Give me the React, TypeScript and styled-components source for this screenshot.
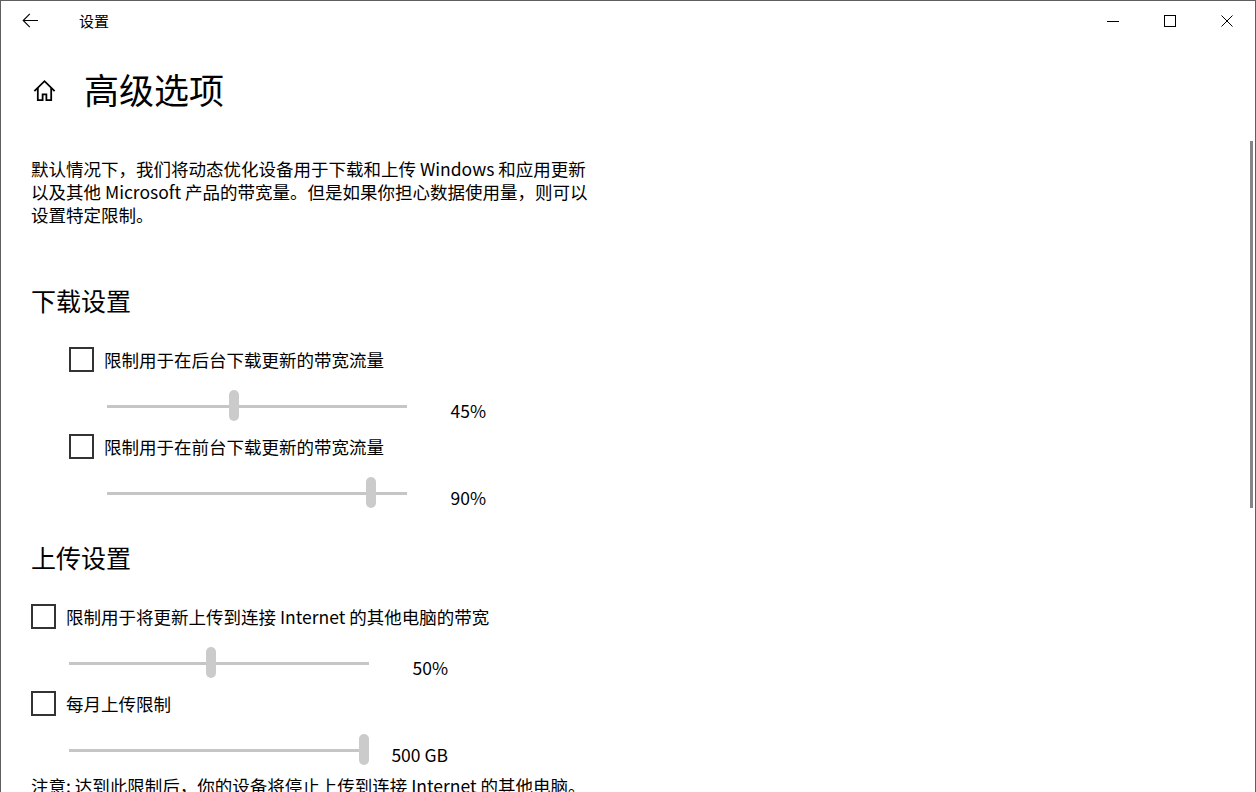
import React from 'react';
import styled, { createGlobalStyle } from 'styled-components';

const FONT = `"Noto Sans CJK SC", "Noto Sans", sans-serif`;

type Option = {
  label: string;
  value: number;
  text: string;
};

const downloadOptions: Option[] = [
  { label: '限制用于在后台下载更新的带宽流量', value: 45, text: '45%' },
  { label: '限制用于在前台下载更新的带宽流量', value: 90, text: '90%' },
];

const uploadOptions: Option[] = [
  { label: '限制用于将更新上传到连接 Internet 的其他电脑的带宽', value: 50, text: '50%' },
  { label: '每月上传限制', value: 100, text: '500 GB' },
];

// windows sliders here run from 5 to 100
const MIN = 5;
const MAX = 100;
const TRACK = 300;
const THUMB = 10;

const App = () => {
  return (
    <>
      <GlobalStyle />
      <Window>
        <TitleBar>
          <BackButton>
            <svg width="17" height="15" viewBox="0 0 17 15" fill="none" stroke="#000" strokeWidth="1.1">
              <path d="M16 7.5H1.2M7.8 0.9L1.2 7.5l6.6 6.6" />
            </svg>
          </BackButton>
          <AppName>设置</AppName>
          <Spacer />
          <CaptionButton>
            <svg width="12" height="12" viewBox="0 0 12 12" stroke="#000" strokeWidth="1">
              <path d="M0 6.5h12" />
            </svg>
          </CaptionButton>
          <CaptionButton>
            <svg width="12" height="12" viewBox="0 0 12 12" fill="none" stroke="#000" strokeWidth="1">
              <rect x="0.5" y="0.5" width="11" height="11" />
            </svg>
          </CaptionButton>
          <CaptionButton>
            <svg width="12" height="12" viewBox="0 0 12 12" stroke="#000" strokeWidth="1">
              <path d="M0.5 0.5l11 11M11.5 0.5l-11 11" />
            </svg>
          </CaptionButton>
        </TitleBar>

        <Content>
          <PageHeader>
            <HomeIcon>
              <svg width="23" height="23" viewBox="0 0 22 22" fill="none" stroke="#000" strokeWidth="1.7" strokeLinejoin="miter">
                <path d="M1.3 11.6L11 2.1l9.7 9.5" />
                <path d="M4.6 8.6V20.2h4.6v-5.6h3.6v5.6h4.6V8.6" />
              </svg>
            </HomeIcon>
            <PageTitle>高级选项</PageTitle>
          </PageHeader>

          <Intro>
            默认情况下，我们将动态优化设备用于下载和上传 Windows 和应用更新
            <br />
            以及其他 Microsoft 产品的带宽量。但是如果你担心数据使用量，则可以
            <br />
            设置特定限制。
          </Intro>

          <SectionTitle>下载设置</SectionTitle>
          <OptionGroup $indent={38}>
            {downloadOptions.map((o) => (
              <OptionItem key={o.label} option={o} />
            ))}
          </OptionGroup>

          <SectionTitle>上传设置</SectionTitle>
          <OptionGroup $indent={0}>
            {uploadOptions.map((o) => (
              <OptionItem key={o.label} option={o} />
            ))}
          </OptionGroup>

          <Note>注意: 达到此限制后，你的设备将停止上传到连接 Internet 的其他电脑。</Note>
        </Content>

        <ScrollThumb />
      </Window>
    </>
  );
};

const OptionItem = ({ option }: { option: Option }) => {
  const left = ((option.value - MIN) / (MAX - MIN)) * (TRACK - THUMB);
  return (
    <div>
      <CheckRow>
        <CheckBox />
        <CheckLabel>{option.label}</CheckLabel>
      </CheckRow>
      <SliderRow>
        <Track>
          <Rail />
          <Thumb style={{ left }} />
        </Track>
        <Value>{option.text}</Value>
      </SliderRow>
    </div>
  );
};

const GlobalStyle = createGlobalStyle`
  html, body {
    margin: 0;
    padding: 0;
    background: #ffffff;
    overflow: hidden;
  }

  * {
    box-sizing: border-box;
  }
`;

const Window = styled.div`
  position: relative;
  width: 1256px;
  height: 792px;
  overflow: hidden;

  border: 1px solid #5e5e5e;
  border-bottom: none;
  background: #ffffff;

  font-family: ${FONT};
  color: #000000;
`;

const TitleBar = styled.div`
  display: flex;
  align-items: center;
  height: 39px;
`;

const BackButton = styled.div`
  display: flex;
  justify-content: center;
  align-items: center;
  width: 59px;
  height: 39px;
`;

const AppName = styled.span`
  margin-left: 19px;
  font-size: 15px;
  line-height: 20px;
`;

const Spacer = styled.div`
  flex: 1;
`;

const CaptionButton = styled.div`
  display: flex;
  justify-content: center;
  align-items: center;
  width: 57px;
  height: 39px;
`;

const Content = styled.main`
  padding-left: 30px;
`;

const PageHeader = styled.header`
  display: flex;
  align-items: center;
  height: 44px;
  margin-top: 27px;
`;

const HomeIcon = styled.div`
  display: flex;
  justify-content: center;
  align-items: center;
  width: 27px;
  height: 26px;
  margin-top: 2px;
  margin-right: 26px;
`;

const PageTitle = styled.h1`
  margin: 0;
  font-size: 35px;
  font-weight: 400;
  line-height: 44px;
`;

const Intro = styled.p`
  margin: 46px 0 57px;
  font-size: 17.5px;
  line-height: 23px;
`;

const SectionTitle = styled.h2`
  margin: 23px 0 26px;
  font-size: 25px;
  font-weight: 400;
  line-height: 34px;
`;

const OptionGroup = styled.section<{ $indent: number }>`
  display: flex;
  flex-direction: column;
  padding-left: ${(p) => p.$indent}px;
`;

const CheckRow = styled.div`
  display: flex;
  align-items: center;
  height: 32px;
`;

const CheckBox = styled.span`
  width: 25px;
  height: 25px;
  border: 2px solid #333333;
  background: #ffffff;
`;

const CheckLabel = styled.span`
  margin-left: 10px;
  font-size: 17.5px;
  line-height: 23px;
`;

const SliderRow = styled.div`
  display: flex;
  align-items: center;
  height: 40px;
  margin: 11px 0 4px;
  padding-left: 38px;
`;

const Track = styled.div`
  position: relative;
  display: flex;
  align-items: center;
  width: ${TRACK}px;
  height: 40px;
`;

const Rail = styled.div`
  width: 100%;
  height: 3px;
  background: #c6c6c6;
`;

const Thumb = styled.div`
  position: absolute;
  top: 4px;
  width: ${THUMB}px;
  height: 31px;
  border-radius: 5px;
  background: #cbcbcb;
`;

const Value = styled.span`
  width: 79px;
  margin-top: 8px;
  text-align: right;
  font-size: 17.5px;
  line-height: 23px;
  white-space: nowrap;
`;

const Note = styled.p`
  margin: 0;
  font-size: 17.5px;
  line-height: 23px;
`;

const ScrollThumb = styled.div`
  position: absolute;
  top: 140px;
  right: 2px;
  width: 3px;
  height: 367px;
  background: #858585;
`;

export default App;
